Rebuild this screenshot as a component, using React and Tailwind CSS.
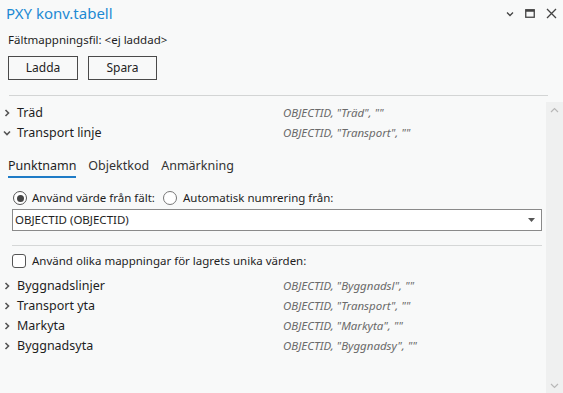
import React from "react";

const font = { fontFamily: '"Noto Sans", "Open Sans", sans-serif' };

function ChevRight() {
  return (
    <svg width="8" height="8" viewBox="0 0 8 8" className="shrink-0">
      <path d="M2.5 1 L5.5 4 L2.5 7" fill="none" stroke="#555" strokeWidth="1.6" />
    </svg>
  );
}
function ChevDown() {
  return (
    <svg width="8" height="8" viewBox="0 0 8 8" className="shrink-0">
      <path d="M1 2.5 L4 5.5 L7 2.5" fill="none" stroke="#555" strokeWidth="1.6" />
    </svg>
  );
}

function Row({ label, value, open }) {
  return (
    <div className="flex h-[20px] items-center">
      <div className="flex w-[17px] items-center pl-[3px]">{open ? <ChevDown /> : <ChevRight />}</div>
      <div className="w-[266px] text-[12.5px] text-[#1e1e1e]">{label}</div>
      <div className="text-[11.5px] italic text-[#6a6a6a]">{value}</div>
    </div>
  );
}

export default function App() {
  return (
    <div className="h-[393px] w-[563px] overflow-hidden bg-[#f8f9f9] flex flex-col" style={font}>
      <div className="flex h-[27px] items-center justify-between pl-[6px] pr-[6px]">
        <div className="text-[15px] text-[#1d8ad3]">PXY konv.tabell</div>
        <div className="flex items-center gap-[11px]">
          <svg width="8" height="6" viewBox="0 0 8 6">
            <path d="M1 1.5 L4 4.5 L7 1.5" fill="none" stroke="#444" strokeWidth="1.3" />
          </svg>
          <svg width="10" height="9" viewBox="0 0 10 9">
            <rect x="0.75" y="0.75" width="8.5" height="7.5" fill="none" stroke="#444" strokeWidth="1.3" />
            <rect x="0.75" y="0.75" width="8.5" height="2" fill="#444" />
          </svg>
          <svg width="11" height="11" viewBox="0 0 11 11">
            <path d="M1 1 L10 10 M10 1 L1 10" stroke="#444" strokeWidth="1.3" />
          </svg>
        </div>
      </div>
      <div className="flex h-[22px] items-center pl-[8px] pt-[3px] text-[11.5px] text-[#1e1e1e]">
        Fältmappningsfil: &lt;ej laddad&gt;
      </div>
      <div className="mt-[7px] flex gap-[10px] pl-[8px]">
        <div className="flex h-[24px] w-[70px] items-center justify-center border border-[#4a4a4a] text-[12px] text-[#1e1e1e]">
          Ladda
        </div>
        <div className="flex h-[24px] w-[69px] items-center justify-center border border-[#4a4a4a] text-[12px] text-[#1e1e1e]">
          Spara
        </div>
      </div>
      <div className="ml-[9px] mr-[15px] mt-[15px] h-px bg-[#d3d5d5]" />
      <div className="flex flex-1 pt-[6px]">
        <div className="flex-1 pt-[1px]">
          <Row label="Träd" value={'OBJECTID, "Träd", ""'} />
          <Row label="Transport linje" value={'OBJECTID, "Transport", ""'} open />
          <div className="mt-[13px] flex gap-[12px] pl-[8px] text-[12.5px]">
            <div className="flex flex-col">
              <span className="h-[19px] leading-[19px] text-[#1e1e1e]">Punktnamn</span>
              <span className="mt-[1px] h-[2px] bg-[#1f7cc7]" />
            </div>
            <span className="h-[19px] leading-[19px] text-[#333]">Objektkod</span>
            <span className="h-[19px] leading-[19px] text-[#333]">Anmärkning</span>
          </div>
          <div className="mt-[12px] flex h-[16px] items-center pl-[13px] text-[11.5px] text-[#1e1e1e]">
            <span className="flex h-[14px] w-[14px] items-center justify-center rounded-full border border-[#555] bg-white">
              <span className="h-[7px] w-[7px] rounded-full bg-[#444]" />
            </span>
            <span className="ml-[5px]">Använd värde från fält:</span>
            <span className="ml-[8px] h-[14px] w-[14px] rounded-full border border-[#777] bg-white" />
            <span className="ml-[6px]">Automatisk numrering från:</span>
          </div>
          <div className="ml-[12px] mr-[4px] mt-[3px] flex h-[22px] items-center justify-between border border-[#8a8a8a] bg-white pl-[2px] pr-[6px] text-[11.5px] text-[#1e1e1e]">
            <span>OBJECTID (OBJECTID)</span>
            <svg width="7" height="4" viewBox="0 0 7 4">
              <path d="M0 0 H7 L3.5 4 Z" fill="#555" />
            </svg>
          </div>
          <div className="ml-[12px] mr-[4px] mt-[14px] h-px bg-[#d5d7d7]" />
          <div className="mt-[8px] flex h-[14px] items-center pl-[12px] text-[11.5px] text-[#1e1e1e]">
            <span className="h-[14px] w-[14px] rounded-[3px] border border-[#555] bg-white" />
            <span className="ml-[6px]">Använd olika mappningar för lagrets unika värden:</span>
          </div>
          <div className="mt-[8px]">
            <Row label="Byggnadslinjer" value={'OBJECTID, "Byggnadsl", ""'} />
            <Row label="Transport yta" value={'OBJECTID, "Transport", ""'} />
            <Row label="Markyta" value={'OBJECTID, "Markyta", ""'} />
            <Row label="Byggnadsyta" value={'OBJECTID, "Byggnadsy", ""'} />
          </div>
        </div>
        <div className="flex w-[17px] flex-col items-center justify-between bg-[#eff0f0] pb-[4px] pt-[5px]">
          <svg width="9" height="6" viewBox="0 0 9 6">
            <path d="M1 5 L4.5 1.5 L8 5" fill="none" stroke="#b8b8b8" strokeWidth="1.2" />
          </svg>
          <svg width="9" height="6" viewBox="0 0 9 6">
            <path d="M1 1 L4.5 4.5 L8 1" fill="none" stroke="#b8b8b8" strokeWidth="1.2" />
          </svg>
        </div>
      </div>
    </div>
  );
}
